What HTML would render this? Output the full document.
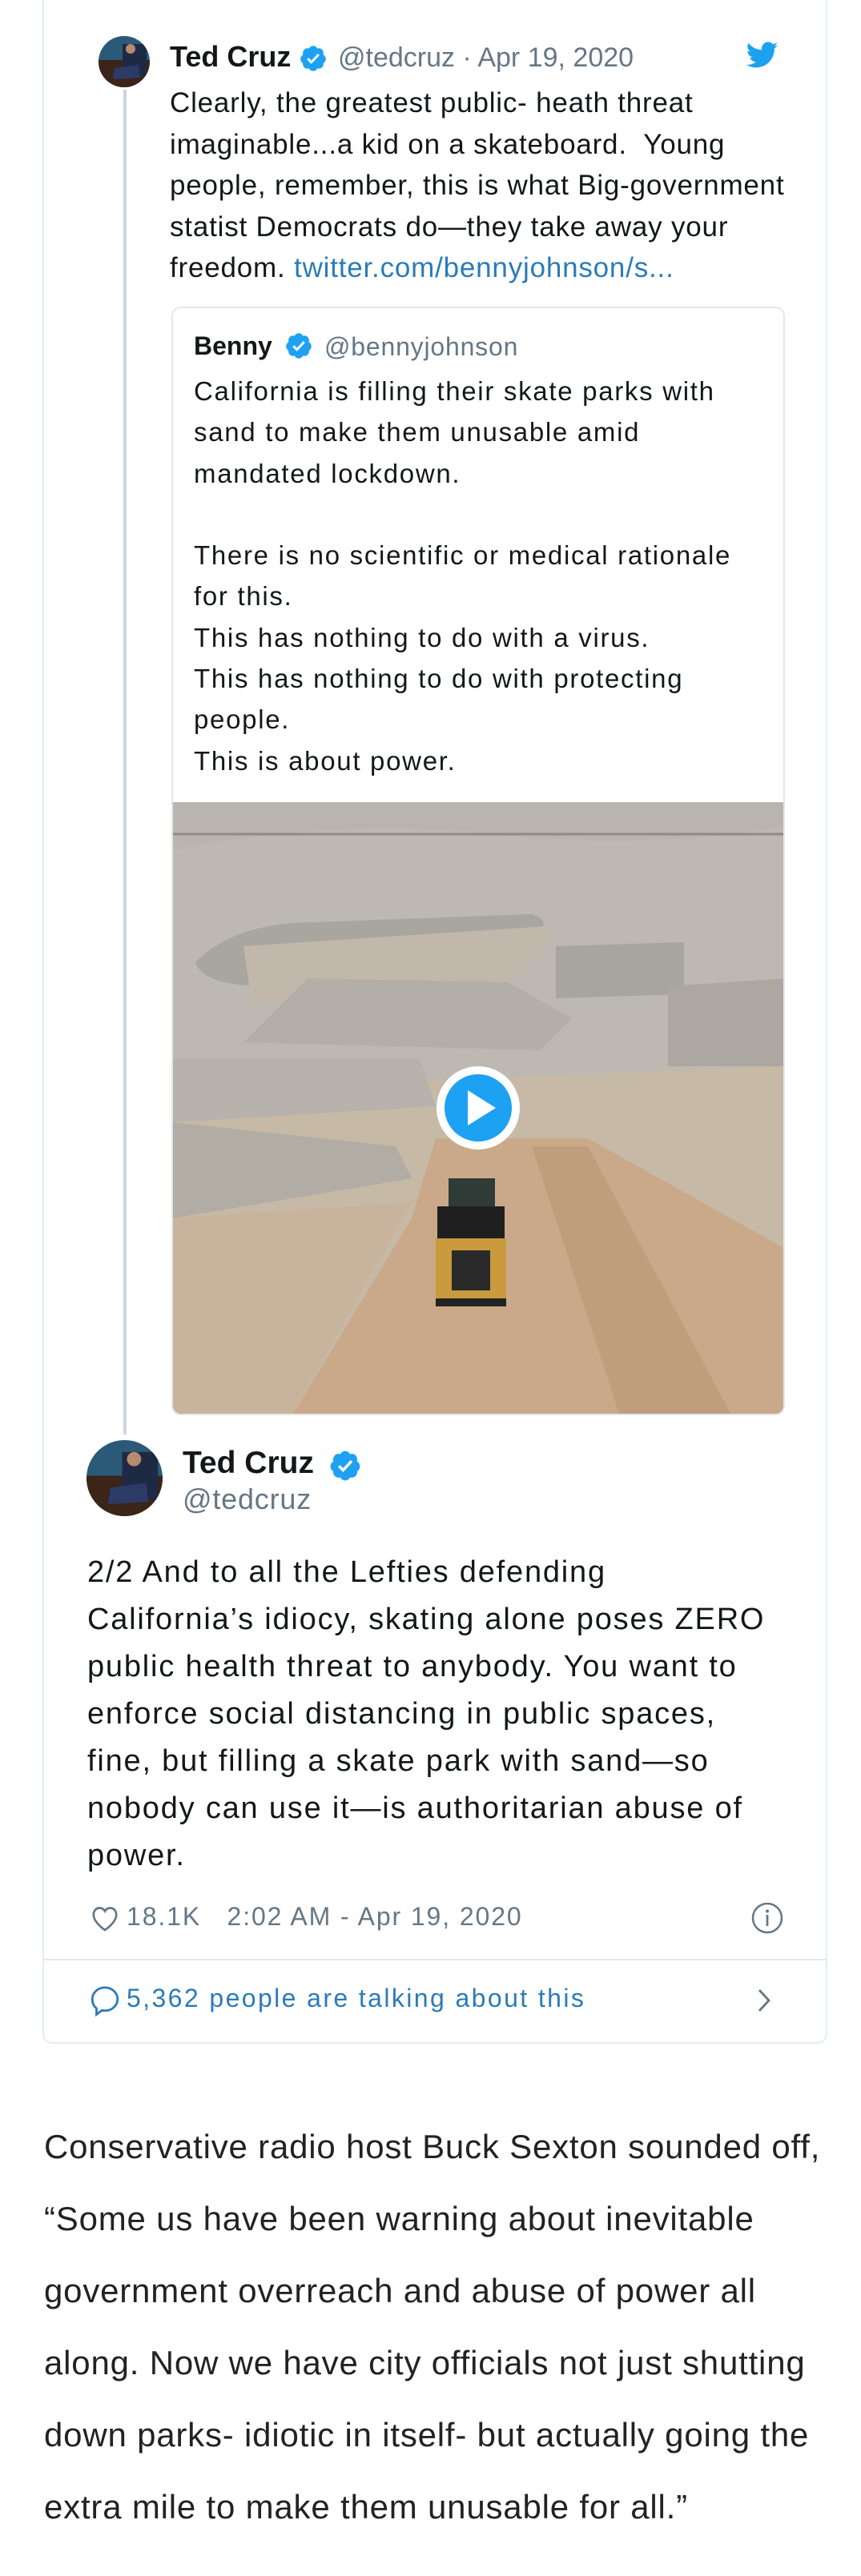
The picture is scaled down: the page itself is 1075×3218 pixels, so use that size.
<!DOCTYPE html>
<html><head><meta charset="utf-8">
<style>
*{margin:0;padding:0;box-sizing:border-box}
body{width:1075px;height:3218px;background:#fff;position:relative;overflow:hidden;font-family:"Liberation Sans",Arial,sans-serif;color:#14171a}
.a{position:absolute;white-space:nowrap}
.t1{font-size:35px;line-height:51.5px;letter-spacing:0.8px}
.q{font-size:33px;line-height:51.3px;letter-spacing:1.7px}
.t2{font-size:38px;line-height:59px;letter-spacing:1.8px}
.art{font-size:42px;line-height:90px;color:#222;letter-spacing:0.8px}
.g{color:#657786}
</style></head><body>
<div class="a" style="left:53px;top:-20px;width:980px;height:2573px;border:2px solid #e6ecf0;border-radius:12px"></div>
<div class="a" style="left:53px;top:2447px;width:980px;height:2px;background:#e1e8ed"></div>
<div class="a" style="left:154px;top:112px;width:4px;height:1680px;background:#ccd6dd"></div>
<svg class="a" style="left:123px;top:45px" width="64" height="64" viewBox="0 0 64 64"><defs><clipPath id="c1"><circle cx="32" cy="32" r="32"/></clipPath></defs><g clip-path="url(#c1)"><rect width="64" height="64" fill="#2a5a78"/><rect y="30" width="64" height="34" fill="#3b2418"/><rect x="30" y="10" width="30" height="40" fill="#1e2a44"/><circle cx="40" cy="16" r="6" fill="#b88a6e"/><path d="M20 40 L50 36 L52 52 L18 54Z" fill="#2c3a66"/></g></svg>
<div class="a" style="left:212px;top:53px;font-size:36px;line-height:36px;font-weight:bold">Ted Cruz</div>
<svg class="a" style="left:373px;top:55px" width="36" height="36" viewBox="0 0 24 24"><path fill="#1da1f2" d="M22.5 12.5c0-1.58-.875-2.95-2.148-3.6.154-.435.238-.905.238-1.4 0-2.21-1.71-3.998-3.818-3.998-.47 0-.92.084-1.336.25C14.818 2.415 13.51 1.5 12 1.5s-2.816.917-3.437 2.25c-.415-.165-.866-.25-1.336-.25-2.11 0-3.818 1.79-3.818 4 0 .494.083.964.237 1.4-1.272.65-2.147 2.018-2.147 3.6 0 1.495.782 2.798 1.942 3.486-.02.17-.032.34-.032.514 0 2.21 1.708 4 3.818 4 .47 0 .92-.086 1.335-.25.62 1.334 1.926 2.25 3.437 2.25 1.512 0 2.818-.916 3.437-2.25.415.163.865.248 1.336.248 2.11 0 3.818-1.79 3.818-4 0-.174-.012-.344-.033-.513 1.158-.687 1.943-1.99 1.943-3.484z"/><path fill="#fff" d="M10.5 16.6l-3.7-3.7 1.4-1.4 2.3 2.3 5.3-5.8 1.5 1.35z"/></svg>
<div class="a g" style="left:422px;top:55px;font-size:34px;line-height:34px">@tedcruz · Apr 19, 2020</div>
<svg class="a" style="left:932px;top:52px" width="40" height="34" viewBox="0 0 24 20"><path fill="#1da1f2" d="M23.6 2.4c-.9.4-1.8.6-2.8.8 1-.6 1.8-1.6 2.1-2.7-.9.6-2 1-3.1 1.2C18.9.7 17.6.1 16.2.1c-2.7 0-4.8 2.2-4.8 4.8 0 .4 0 .8.1 1.1C7.5 5.8 3.9 3.9 1.5.9c-.4.7-.7 1.6-.7 2.4 0 1.7.9 3.2 2.200 4-.8 0-1.5-.2-2.2-.6v.1c0 2.3 1.7 4.3 3.9 4.7-.4.1-.8.2-1.3.2-.3 0-.6 0-.9-.1.6 1.9 2.4 3.3 4.5 3.4-1.7 1.3-3.7 2.1-6 2.1-.4 0-.8 0-1.2-.1 2.1 1.4 4.7 2.2 7.4 2.2 8.9 0 13.7-7.4 13.7-13.7v-.6c1-.7 1.8-1.6 2.5-2.5z"/></svg>
<div class="a t1" style="left:212px;top:103px">Clearly, the greatest public- heath threat<br>imaginable...a kid on a skateboard.&nbsp; Young<br>people, remember, this is what Big-government<br>statist Democrats do—they take away your<br>freedom. <span style="color:#2b7bb9">twitter.com/bennyjohnson/s...</span></div>
<div class="a" style="left:214px;top:383px;width:766px;height:1385px;border:2px solid #e1e8ed;border-radius:12px;overflow:hidden">
<svg style="position:absolute;left:-2px;top:617px" width="770" height="767" viewBox="0 0 770 767">
<rect width="770" height="767" fill="#c6b9a6"/>
<rect width="770" height="300" fill="#b9b5ae"/>
<path d="M0 60 Q200 20 400 40 T770 30 L770 330 L0 360Z" fill="#bdb9b2"/>
<path d="M30 200 Q80 150 180 150 L450 140 Q480 150 450 170 L330 190 Q260 240 120 230 Q40 230 30 200Z" fill="#a9a59f"/>
<path d="M90 180 L470 155 L470 180 L400 250 L100 250Z" fill="#c1b8ab"/>
<path d="M170 220 L420 225 L500 270 L460 310 L90 300Z" fill="#b3aea7"/>
<path d="M480 180 L640 175 L640 240 L480 245Z" fill="#a8a49e"/>
<path d="M0 320 L310 320 L330 380 L0 400Z" fill="#b7b2ab"/>
<path d="M0 400 L280 430 L300 470 L0 520Z" fill="#b1aca4"/>
<path d="M620 230 L770 220 L770 330 L620 330Z" fill="#aca8a1"/>
<path d="M330 420 L520 420 L770 560 L770 767 L150 767 L300 520Z" fill="#caa98a"/>
<path d="M0 520 L300 500 L150 767 L0 767Z" fill="#c8b49c"/>
<path d="M450 430 L520 430 L700 767 L560 767Z" fill="#c09d7c"/>
<rect x="346" y="470" width="58" height="38" fill="#2f3b36"/>
<rect x="332" y="505" width="84" height="45" fill="#1f1f1f"/>
<rect x="330" y="545" width="88" height="80" fill="#c99a3e"/>
<rect x="350" y="560" width="48" height="50" fill="#2a2a2a"/>
<rect x="330" y="620" width="88" height="10" fill="#222"/>
<path d="M0 40 L770 40" stroke="#8f8a83" stroke-width="3"/>
<circle cx="383" cy="382" r="52" fill="#fff"/>
<circle cx="383" cy="382" r="42" fill="#1da1f2"/>
<path d="M370 360 L370 404 L405 382Z" fill="#fff"/>
</svg>
</div>
<div class="a" style="left:242px;top:416px;font-size:32px;line-height:32px"><b>Benny</b></div>
<svg class="a" style="left:355px;top:414px" width="36" height="36" viewBox="0 0 24 24"><path fill="#1da1f2" d="M22.5 12.5c0-1.58-.875-2.95-2.148-3.6.154-.435.238-.905.238-1.4 0-2.21-1.71-3.998-3.818-3.998-.47 0-.92.084-1.336.25C14.818 2.415 13.51 1.5 12 1.5s-2.816.917-3.437 2.25c-.415-.165-.866-.25-1.336-.25-2.11 0-3.818 1.79-3.818 4 0 .494.083.964.237 1.4-1.272.65-2.147 2.018-2.147 3.6 0 1.495.782 2.798 1.942 3.486-.02.17-.032.34-.032.514 0 2.21 1.708 4 3.818 4 .47 0 .92-.086 1.335-.25.62 1.334 1.926 2.25 3.437 2.25 1.512 0 2.818-.916 3.437-2.25.415.163.865.248 1.336.248 2.11 0 3.818-1.79 3.818-4 0-.174-.012-.344-.033-.513 1.158-.687 1.943-1.99 1.943-3.484z"/><path fill="#fff" d="M10.5 16.6l-3.7-3.7 1.4-1.4 2.3 2.3 5.3-5.8 1.5 1.35z"/></svg>
<div class="a g" style="left:405px;top:417px;font-size:32px;line-height:32px;letter-spacing:0.8px">@bennyjohnson</div>
<div class="a q" style="left:242px;top:463px">California is filling their skate parks with<br>sand to make them unusable amid<br>mandated lockdown.<br><br>There is no scientific or medical rationale<br>for this.<br>This has nothing to do with a virus.<br>This has nothing to do with protecting<br>people.<br>This is about power.</div>
<svg class="a" style="left:108px;top:1799px" width="95" height="95" viewBox="0 0 64 64"><defs><clipPath id="c2"><circle cx="32" cy="32" r="32"/></clipPath></defs><g clip-path="url(#c2)"><rect width="64" height="64" fill="#2a5a78"/><rect y="30" width="64" height="34" fill="#3b2418"/><rect x="30" y="10" width="30" height="40" fill="#1e2a44"/><circle cx="40" cy="16" r="6" fill="#b88a6e"/><path d="M20 40 L50 36 L52 52 L18 54Z" fill="#2c3a66"/></g></svg>
<div class="a" style="left:228px;top:1808px;font-size:39px;line-height:39px;font-weight:bold">Ted Cruz</div>
<svg class="a" style="left:410px;top:1810px" width="42" height="42" viewBox="0 0 24 24"><path fill="#1da1f2" d="M22.5 12.5c0-1.58-.875-2.95-2.148-3.6.154-.435.238-.905.238-1.4 0-2.21-1.71-3.998-3.818-3.998-.47 0-.92.084-1.336.25C14.818 2.415 13.51 1.5 12 1.5s-2.816.917-3.437 2.250c-.415-.165-.866-.25-1.336-.25-2.110 0-3.818 1.79-3.818 4 0 .494.083.964.237 1.4-1.272.65-2.147 2.018-2.147 3.6 0 1.495.782 2.798 1.942 3.486-.02.17-.032.34-.032.514 0 2.21 1.708 4 3.818 4 .47 0 .92-.086 1.335-.25.62 1.334 1.926 2.25 3.437 2.25 1.512 0 2.818-.916 3.437-2.25.415.163.865.248 1.336.248 2.11 0 3.818-1.79 3.818-4 0-.174-.012-.344-.033-.513 1.158-.687 1.943-1.99 1.943-3.484z"/><path fill="#fff" d="M10.5 16.6l-3.7-3.7 1.4-1.4 2.3 2.3 5.3-5.8 1.5 1.35z"/></svg>
<div class="a g" style="left:228px;top:1855px;font-size:36px;line-height:36px;letter-spacing:0.8px">@tedcruz</div>
<div class="a t2" style="left:109px;top:1935px">2/2 And to all the Lefties defending<br>California’s idiocy, skating alone poses ZERO<br>public health threat to anybody. You want to<br>enforce social distancing in public spaces,<br>fine, but filling a skate park with sand—so<br>nobody can use it—is authoritarian abuse of<br>power.</div>
<svg class="a" style="left:110px;top:2376px" width="42" height="40" viewBox="0 0 24 24"><path fill="none" stroke="#657786" stroke-width="1.6" d="M12 21s-8.5-5.5-8.5-11.5C3.5 6.5 5.5 4.5 8 4.5c1.8 0 3.2 1 4 2.4.8-1.4 2.2-2.4 4-2.4 2.5 0 4.5 2 4.5 5C20.5 15.5 12 21 12 21z"/></svg>
<div class="a g" style="left:158px;top:2378px;font-size:32px;line-height:32px;letter-spacing:1.9px">18.1K&nbsp;&nbsp; 2:02 AM - Apr 19, 2020</div>
<svg class="a" style="left:938px;top:2376px" width="40" height="40" viewBox="0 0 40 40"><circle cx="20" cy="20" r="18" fill="none" stroke="#657786" stroke-width="2.5"/><circle cx="20" cy="11.5" r="2" fill="#657786"/><path d="M20 16v14" stroke="#657786" stroke-width="2.8"/></svg>
<svg class="a" style="left:110px;top:2477px" width="42" height="44" viewBox="0 0 24 24"><path fill="none" stroke="#2b7bb9" stroke-width="1.6" d="M12 2.8c5 0 9 3.7 9 8.3s-4 8.2-9 8.2c-.8 0-1.5-.1-2.2-.2L6 22v-4.3C4 16.2 3 13.8 3 11.1 3 6.5 7 2.8 12 2.8z"/></svg>
<div class="a" style="left:158px;top:2480px;font-size:32px;line-height:32px;color:#2b7bb9;letter-spacing:2.4px">5,362 people are talking about this</div>
<svg class="a" style="left:943px;top:2482px" width="22" height="34" viewBox="0 0 22 34"><path d="M5 4 L17 17 L5 30" fill="none" stroke="#657786" stroke-width="2.8"/></svg>
<div class="a art" style="left:55px;top:2637px">Conservative radio host Buck Sexton sounded off,<br>“Some us have been warning about inevitable<br>government overreach and abuse of power all<br>along. Now we have city officials not just shutting<br>down parks- idiotic in itself- but actually going the<br>extra mile to make them unusable for all.”</div>
</body></html>
